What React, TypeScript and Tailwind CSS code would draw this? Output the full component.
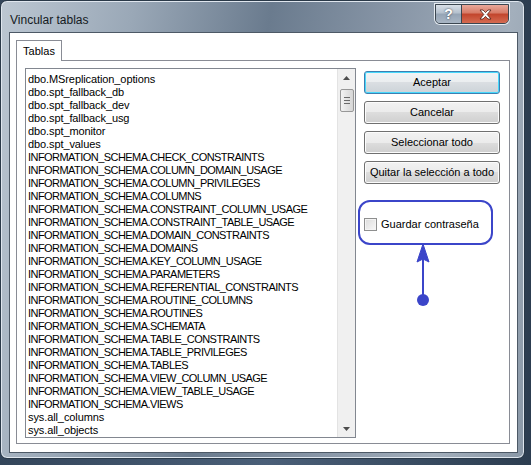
import React from "react";

const TABLES = [
  "dbo.MSreplication_options",
  "dbo.spt_fallback_db",
  "dbo.spt_fallback_dev",
  "dbo.spt_fallback_usg",
  "dbo.spt_monitor",
  "dbo.spt_values",
  "INFORMATION_SCHEMA.CHECK_CONSTRAINTS",
  "INFORMATION_SCHEMA.COLUMN_DOMAIN_USAGE",
  "INFORMATION_SCHEMA.COLUMN_PRIVILEGES",
  "INFORMATION_SCHEMA.COLUMNS",
  "INFORMATION_SCHEMA.CONSTRAINT_COLUMN_USAGE",
  "INFORMATION_SCHEMA.CONSTRAINT_TABLE_USAGE",
  "INFORMATION_SCHEMA.DOMAIN_CONSTRAINTS",
  "INFORMATION_SCHEMA.DOMAINS",
  "INFORMATION_SCHEMA.KEY_COLUMN_USAGE",
  "INFORMATION_SCHEMA.PARAMETERS",
  "INFORMATION_SCHEMA.REFERENTIAL_CONSTRAINTS",
  "INFORMATION_SCHEMA.ROUTINE_COLUMNS",
  "INFORMATION_SCHEMA.ROUTINES",
  "INFORMATION_SCHEMA.SCHEMATA",
  "INFORMATION_SCHEMA.TABLE_CONSTRAINTS",
  "INFORMATION_SCHEMA.TABLE_PRIVILEGES",
  "INFORMATION_SCHEMA.TABLES",
  "INFORMATION_SCHEMA.VIEW_COLUMN_USAGE",
  "INFORMATION_SCHEMA.VIEW_TABLE_USAGE",
  "INFORMATION_SCHEMA.VIEWS",
  "sys.all_columns",
  "sys.all_objects",
];

const BUTTONS = ["Aceptar", "Cancelar", "Seleccionar todo", "Quitar la selección a todo"];

function WinButton({ label, primary }: { label: string; primary?: boolean }) {
  return (
    <div
      className={
        "relative flex h-[23px] w-[136px] items-center justify-center rounded-[3px] border text-[11px] text-black " +
        (primary
          ? "border-[#3c7fb1] bg-[linear-gradient(#f2f4f6_0%,#eaedef_50%,#dadee2_50%,#ccd3d8_100%)] shadow-[inset_0_0_0_1px_#48d8fb]"
          : "border-[#707070] bg-[linear-gradient(#f2f2f2_0%,#ebebeb_50%,#dddddd_50%,#cfcfcf_100%)] shadow-[inset_0_0_0_1px_#fcfcfc]")
      }
    >
      {label}
    </div>
  );
}

function Scrollbar() {
  return (
    <div className="flex w-[18px] flex-col items-center border-l border-[#e3e3e3] bg-[#f0f0f0]">
      <div className="flex h-[17px] w-full items-center justify-center">
        <svg width="7" height="4" viewBox="0 0 7 4">
          <path d="M0 4 L3.5 0 L7 4 Z" fill="#4d4d4d" />
        </svg>
      </div>
      <div className="mt-[3px] flex h-[23px] w-[14px] flex-col items-center justify-center gap-[2px] rounded-[2px] border border-[#979797] bg-[linear-gradient(90deg,#f3f3f3,#e3e3e3_50%,#d6d6d6)]">
        <div className="h-px w-[6px] bg-[#6a6a6a]" />
        <div className="h-px w-[6px] bg-[#6a6a6a]" />
        <div className="h-px w-[6px] bg-[#6a6a6a]" />
      </div>
      <div className="flex-1" />
      <div className="flex h-[17px] w-full items-center justify-center">
        <svg width="7" height="4" viewBox="0 0 7 4">
          <path d="M0 0 L7 0 L3.5 4 Z" fill="#4d4d4d" />
        </svg>
      </div>
    </div>
  );
}

export default function App() {
  return (
    <div
      className="relative h-[465px] w-[531px] overflow-hidden bg-[linear-gradient(90deg,#33455a,#4a5f78_50%,#2c3d50)]"
      style={{ fontFamily: '"Liberation Sans", Arial, sans-serif' }}
    >
      <div className="flex h-[459px] w-[525px] flex-col rounded-[7px] border border-[#2a3948] bg-[linear-gradient(100deg,#bcc7d2_0%,#9aa8b7_22%,#6a7b8e_45%,#8795a6_65%,#a3afbc_85%,#8a98a7_100%)] shadow-[inset_0_0_0_1px_#dfe6ee]">
        {/* title bar */}
        <div className="relative h-[31px] shrink-0">
          <div className="pl-[9px] pt-[10px] text-[12px] text-[#141a22]">Vincular tablas</div>
          <div className="absolute right-[15px] top-[3px] flex h-[20px] overflow-hidden rounded-b-[5px] border border-[#3b4650] shadow-[0_0_0_1px_#e6ecf2]">
            <div className="flex w-[26px] items-center justify-center border-r border-[#3b4650] bg-[linear-gradient(#d9e0e8_0%,#b4c0cd_45%,#95a4b5_50%,#a9b6c4_100%)]">
              <span className="text-[14px] font-bold leading-none text-white [text-shadow:0_0_2px_#2b3440]">?</span>
            </div>
            <div className="flex w-[46px] items-center justify-center bg-[linear-gradient(#e9a89a_0%,#d67a66_45%,#c2442c_50%,#d56c52_100%)]">
              <svg width="13" height="11" viewBox="0 0 13 11">
                <path
                  d="M1 1 L4 1 L6.5 3.6 L9 1 L12 1 L8.2 5.5 L12 10 L9 10 L6.5 7.4 L4 10 L1 10 L4.8 5.5 Z"
                  fill="#ffffff"
                  stroke="#4b1d14"
                  strokeWidth="0.8"
                />
              </svg>
            </div>
          </div>
        </div>

        {/* client area */}
        <div className="ml-[8px] h-[421px] w-[509px] border border-[#4d5966] bg-white">
          <div className="px-[6px] pt-[7px]">
            <div className="flex">
              <div className="relative z-10 -mb-px flex h-[21px] w-[46px] items-center justify-center border border-b-0 border-[#898c95] bg-white text-[11px] text-black">
                Tablas
              </div>
            </div>
            <div className="flex h-[384px] w-[494px] border border-[#898c95] bg-white pl-[8px] pt-[7px]">
              {/* list */}
              <div className="flex h-[370px] w-[331px] border border-[#828790] bg-white">
                <div className="flex-1 overflow-hidden pl-[2px] pt-[4px]">
                  {TABLES.map((t) => (
                    <div
                      key={t}
                      className={
                        "h-[13px] whitespace-nowrap text-[11px] leading-[13px] text-black " +
                        (t.startsWith("INFORMATION") ? "tracking-[-0.55px]" : "tracking-[-0.1px]")
                      }
                    >
                      {t}
                    </div>
                  ))}
                </div>
                <Scrollbar />
              </div>

              {/* buttons */}
              <div className="ml-[8px] mt-[3px] flex flex-col">
                <div className="flex flex-col gap-[7px]">
                  {BUTTONS.map((b, i) => (
                    <WinButton key={b} label={b} primary={i === 0} />
                  ))}
                </div>
                <div className="mt-[32px] flex items-center gap-[4px] text-[11px] text-black">
                  <div className="h-[13px] w-[13px] border border-[#8e8f8f] bg-[linear-gradient(135deg,#dcdcdc,#f8f8f8)] shadow-[inset_0_0_0_1px_#f4f4f4]" />
                  <span>Guardar contraseña</span>
                </div>
              </div>
            </div>
          </div>
        </div>
      </div>

      {/* annotation */}
      <div className="absolute left-[358px] top-[200px] h-[45px] w-[135px] rounded-[12px] border-2 border-[#3b45c9]" />
      <svg className="absolute left-[410px] top-[242px]" width="26" height="66" viewBox="0 0 26 66">
        <path d="M13 2 L19 20 L13 17 L7 20 Z" fill="#3b45c9" stroke="#3b45c9" strokeWidth="1" strokeLinejoin="round" />
        <line x1="13" y1="16" x2="13" y2="56" stroke="#3b45c9" strokeWidth="2" />
        <circle cx="13" cy="58" r="6" fill="#3b45c9" />
      </svg>
    </div>
  );
}
